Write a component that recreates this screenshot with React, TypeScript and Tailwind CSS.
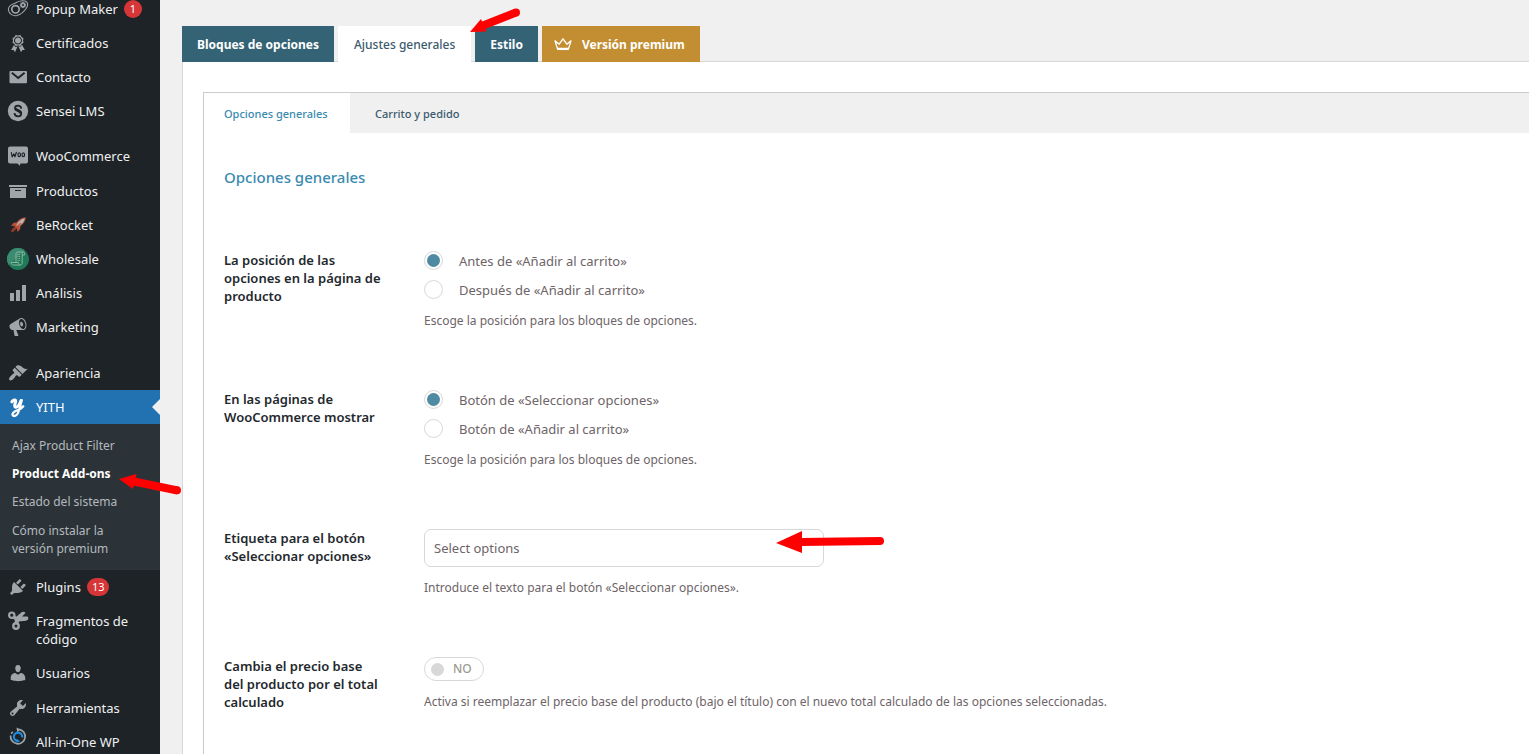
import type { ReactNode } from "react";

const GREY = "#a0a5aa";

const PATHS = {
  awards:
    "M4.46 5.16L5 7.46l-.54 2.29 2.01 1.24L7.7 13l2.3-.54 2.3.54 1.23-2.01 2.01-1.24L15 7.46l.54-2.3-2-1.24-1.24-2.01-2.3.55-2.29-.54-1.25 2zm5.55 6.34c-2.21 0-4-1.79-4-4 0-2.22 1.79-4 4-4 2.22 0 4 1.78 4 4 0 2.21-1.78 4-4 4zm-.02-1C8.33 10.5 7 9.16 7 7.5c0-1.65 1.33-3 2.99-3S13 5.85 13 7.5c0 1.66-1.35 3-3.01 3zm3.84 1.1l-1.28 2.24-2.08-.47L13 19.2l1.4-2.2h2.5zm-7.7.07l1.25 2.25 2.13-.51L7 19.2 5.6 17H3.1z",
  archive: "M19 4v2H1V4h18zM2 7h16v10H2V7zm11 3V9H7v1h6z",
  chart: "M18 18V2h-4v16h4zm-6 0V7H8v11h4zm-6 0v-8H2v8h4z",
  megaphone:
    "M18.15 5.94c.46 1.62.38 3.22-.02 4.48-.42 1.28-1.26 2.18-2.3 2.48-.16.06-.26.06-.4.06-.06.02-.12.02-.18.02-.06.02-.14.02-.22.02h-6.8l2.22 5.5c.02.14-.06.26-.14.34-.08.1-.24.16-.34.16H6.95c-.1 0-.26-.06-.34-.16-.08-.08-.16-.2-.14-.34l-1-5.5H4.25l-.02-.02c-.5.06-1.08-.18-1.54-.62s-.88-1.08-1.06-1.88c-.24-.8-.2-1.56-.02-2.2.18-.62.58-1.08 1.06-1.3l.02-.02 9-5.4c.1-.06.18-.1.24-.16.06-.04.14-.08.24-.12.16-.08.28-.12.5-.18 1.04-.3 2.24.1 3.22.98s1.84 2.24 2.26 3.86zm-2.58 5.98h-.02c.4-.1.74-.34 1.04-.7.58-.7.86-1.76.86-3.04 0-.64-.1-1.3-.28-1.98-.34-1.36-1.02-2.5-1.78-3.24s-1.68-1.1-2.46-.88c-.82.22-1.4.96-1.7 2-.32 1.04-.28 2.36.06 3.72.38 1.36 1 2.5 1.8 3.24.78.74 1.62 1.1 2.48.88zm-2.54-7.08c.22-.04.42-.02.62.04.38.16.76.48 1.02 1s.42 1.2.42 1.78c0 .3-.04.56-.12.8-.18.48-.44.84-.86.94-.34.1-.8-.06-1.14-.4s-.64-.86-.78-1.5c-.18-.62-.12-1.24.02-1.72s.48-.84.82-.94z",
  brush:
    "M14.48 11.06L7.41 3.99l1.5-1.5c.5-.56 2.3-.47 3.51.32 1.21.8 1.43 1.28 2.91 2.1 1.18.64 2.45 1.26 4.45.85zm-.71.71L6.7 4.7 4.93 6.47c-.39.39-.39 1.02 0 1.41l1.06 1.06c.39.39.39 1.03 0 1.42-.6.6-1.43 1.11-2.21 1.69-.35.26-.7.53-1.01.84C1.43 14.23.4 16.08 1.4 17.07c.99 1 2.84-.03 4.18-1.36.31-.31.58-.66.85-1.02.57-.78 1.08-1.61 1.69-2.21.39-.39 1.02-.39 1.41 0l1.06 1.06c.39.39 1.02.39 1.41 0z",
  plug: "M13.11 4.36L9.87 7.6 8 5.73l3.24-3.24c.35-.34 1.05-.2 1.56.32.52.51.66 1.21.31 1.55zm-8 1.77l.91-1.12 9.01 9.01-1.19.84c-.71.71-2.63 1.16-3.82 1.16H6.14L4.9 17.26c-.59.59-1.54.59-2.12 0-.59-.58-.59-1.53 0-2.12l1.24-1.24v-3.88c0-1.13.4-3.19 1.09-3.89zm7.26 3.97l3.24-3.24c.34-.35 1.04-.21 1.55.31.52.51.66 1.21.31 1.55l-3.24 3.25z",
  user: "M10 9.25c-2.27 0-2.73-3.44-2.73-3.44C7 4.02 7.82 2 9.97 2c2.16 0 2.98 2.02 2.71 3.81 0 0-.41 3.44-2.68 3.44zm0 2.57L12.72 10c2.39 0 4.52 2.33 4.52 4.53v2.49s-3.65 1.13-7.24 1.13c-3.65 0-7.24-1.13-7.24-1.13v-2.49c0-2.25 1.94-4.48 4.47-4.48z",
  wrench:
    "M16.68 9.77c-1.34 1.34-3.3 1.67-4.95.99l-5.41 6.52c-.99.99-2.59.99-3.58 0s-.99-2.59 0-3.57l6.52-5.42c-.68-1.65-.35-3.61.99-4.95 1.28-1.28 3.12-1.62 4.72-1.06l-2.89 2.89 2.82 2.82 2.86-2.87c.53 1.58.18 3.39-1.08 4.65zM3.81 16.21c.4.39 1.04.39 1.43 0 .4-.4.4-1.04 0-1.43-.39-.4-1.03-.4-1.43 0-.39.39-.39 1.03 0 1.43z",
};

function Svg({ children }: { children: ReactNode }) {
  return (
    <svg viewBox="0 0 20 20" className="size-5 shrink-0 overflow-visible" aria-hidden="true">
      {children}
    </svg>
  );
}

function Glyph({ d }: { d: string }) {
  return (
    <Svg>
      <path d={d} fill={GREY} />
    </Svg>
  );
}

const popupIcon = (
  <Svg>
    <g fill="none" stroke={GREY} strokeWidth="1.1">
      <path d="M7 4.2C10 2.2 14 1.4 17 2c3 .7 3.300 4.200 1.500 7-2 3-5.500 6.500-9.500 7.500-4 .9-8-1.500-8.500-5.200C0 8.500 2.500 5.500 7 4.200z" />
      <circle cx="7.500" cy="10.300" r="3.700" strokeWidth="1.700" />
    </g>
    <circle cx="15" cy="6" r="1.900" fill="none" stroke={GREY} strokeWidth="1.600" />
    <path d="M15 2.800v6.400M11.800 6h6.400M12.700 3.700l4.600 4.600M17.300 3.700l-4.600 4.600" stroke={GREY} strokeWidth=".9" />
    <circle cx="15" cy="6" r="1" fill="#1d2327" />
  </Svg>
);

const mailIcon = (
  <Svg>
    <rect x="1.500" y="4" width="17.500" height="12.200" rx="1" fill={GREY} />
    <path d="M3.800 5.800l6.400 5.300 6.400-5.300" fill="none" stroke="#1d2327" strokeWidth="1.900" />
  </Svg>
);

const senseiIcon = (
  <Svg>
    <circle cx="10" cy="10" r="10.200" fill={GREY} />
    <path
      d="M13.300 7.600c-.3-1.900-1.500-2.900-3.300-2.900-1.900 0-3 1-3 2.500 0 3.200 6.200 2.300 6.200 5.500 0 1.600-1.300 2.600-3.200 2.600-1.900 0-3.300-1.100-3.600-3.100"
      fill="none"
      stroke="#1d2327"
      strokeWidth="1.800"
    />
    <path d="M7.500 7.900c1.500 1.900 5.400 1.700 5.400 4.600" fill="none" stroke="#1d2327" strokeWidth="2.600" />
  </Svg>
);

const wooIcon = (
  <Svg>
    <path d="M2 .5h16a2 2 0 0 1 2 2V15.500a2 2 0 0 1-2 2h-5.500l-.8 2.200-2.200-2.200H2a2 2 0 0 1-2-2V2.500a2 2 0 0 1 2-2z" fill={GREY} />
    <g fill="none" stroke="#1d2327" strokeWidth="1.200" strokeLinecap="round" strokeLinejoin="round">
      <path d="M3.300 6.500l.9 4.300 1.700-2.900 1 2.900L8.400 6.300" />
      <ellipse cx="11.200" cy="8.700" rx="1.300" ry="1.900" />
      <ellipse cx="15.300" cy="8.700" rx="1.300" ry="1.900" />
    </g>
  </Svg>
);

const rocketIcon = (
  <Svg>
    <path d="M17.800 2.200c-4 .2-7 2-9 5L5.300 8 3 10.800l3 .2 3 3 .4 3 2.600-2.600.6-3.400c3-2 5-5 5.200-8.800z" fill="#b5523a" />
    <path d="M16.800 3.200c-3.500.5-6.200 3-8.600 7l1.600 1.600c3.700-2 6.500-5 7-8.600z" fill="#b9b4b2" />
    <path d="M12.800 8.300L6.500 14" stroke="#c4482d" strokeWidth="1.200" />
    <path d="M6 12l2 2-2 2.500-3.200 1 .9-3z" fill="#8d3a2b" />
  </Svg>
);

const wholesaleIcon = (
  <Svg>
    <circle cx="10" cy="10" r="11" fill="#1f7a58" />
    <path d="M10-1a11 11 0 0 0-9 17.300L16.500 1.100A11 11 0 0 0 10-1z" fill="#3a8b70" />
    <g fill="none" stroke="#8fb5a5" strokeWidth="1">
      <path d="M8 13V4.500c0-1 .6-1.500 1.600-1.500h6c-1 0-1.400.7-1.400 1.600V14c0 1.300-.7 2-1.900 2H5.200c-1.200 0-1.900-.8-1.900-2.500h7.200c0 1.700.6 2.500 1.800 2.500M14.200 6h2.300V4.300c0-.8-.3-1.300-.9-1.300" />
      <path d="M9.500 5.500h3M9.500 7.500h3M9.500 9.500h3M9.500 11.500h3" strokeDasharray="1 .6" />
    </g>
  </Svg>
);

const yithIcon = (
  <Svg>
    <g fill="none" stroke="#fff" strokeLinecap="round" strokeLinejoin="round">
      <path d="M3.800 4.800C5 3 7.500 2 7.700 4c.1 2-2.200 5-.4 6 2.500 1 4.500-3 5.700-6.500" strokeWidth="3" />
      <path d="M13.700 3.200c-.8 3.500-2 8-3.200 11.500-.8 2.800-3.200 5-5.200 4-2-1.200 0-4 3.500-5.200 2.800-1 5-2.200 6.500-4.200" strokeWidth="2.300" />
    </g>
  </Svg>
);

const scissorsIcon = (
  <Svg>
    <g fill="none" stroke={GREY}>
      <circle cx="3.800" cy="4.200" r="2.700" strokeWidth="2.200" />
      <circle cx="8" cy="15" r="2.700" strokeWidth="2.400" />
      <path d="M5.500 6l5 3M8.200 13l1.300-4" strokeWidth="3.600" />
    </g>
    <path d="M6.800 7L13.600 1.200c1.300-1 3.200-.6 3.900.8L14 5.400h5c1.500 0 1.900 2.500.5 3.500-1.100.8-2.400 1.100-4.200 1.200l-4.600.5-1.700 1.600-2.300-1z" fill={GREY} />
  </Svg>
);

const migrationIcon = (
  <Svg>
    <path d="M11.200 2.300a7.300 7.300 0 1 1-8.600 6.200" fill="none" stroke={GREY} strokeWidth="1.700" />
    <path d="M8.500.5l4 1.900-3.300 2.900z" fill={GREY} />
    <path d="M3.200 6.800l1.500-2" stroke={GREY} strokeWidth="1.500" />
    <path d="M14.200 10.500a4.200 4.200 0 1 0-4.500 3.500" fill="none" stroke="#1e8cde" strokeWidth="2.200" />
    <path d="M8.800 11.800l3.300 2.400-3.600 1.600z" fill="#1e8cde" />
  </Svg>
);

type ItemProps = { icon: ReactNode; label: string; count?: number; current?: boolean; raised?: boolean };

function MenuItem({ icon, label, count, current, raised }: ItemProps) {
  return (
    <li className={current ? "relative bg-[#2271b1]" : ""}>
      <a href="#" className="flex min-h-[34px] gap-2 py-2 pl-2 pr-3 text-[13px] leading-[18px] text-[#f0f0f1]">
        <span className={raised ? "flex h-2 items-center" : "flex h-[18px] items-center"}>{icon}</span>
        <span className={current ? "text-white" : ""}>{label}</span>
        {count !== undefined && (
          <span className="-ml-0.5 flex h-[18px] min-w-[18px] items-center justify-center rounded-full bg-[#d63638] px-[5px] text-[11px] text-white">
            {count}
          </span>
        )}
      </a>
      {current && (
        <svg viewBox="0 0 8 16" className="absolute right-0 top-[9px] h-4 w-2" aria-hidden="true">
          <path d="M8 0v16L0 8z" fill="#f0f0f1" />
        </svg>
      )}
    </li>
  );
}

function Sidebar() {
  const sub = "block px-3 py-[5px]";
  return (
    <nav aria-label="Menú principal" className="relative z-10 w-40 shrink-0 bg-[#1d2327]">
      <ul className="-mt-2">
        <MenuItem icon={popupIcon} label="Popup Maker" count={1} />
        <MenuItem icon={<Glyph d={PATHS.awards} />} label="Certificados" />
        <MenuItem icon={mailIcon} label="Contacto" />
        <MenuItem icon={senseiIcon} label="Sensei LMS" />
      </ul>
      <ul className="mt-[11px]">
        <MenuItem icon={wooIcon} label="WooCommerce" />
      </ul>
      <ul className="mt-px">
        <MenuItem icon={<Glyph d={PATHS.archive} />} label="Productos" />
        <MenuItem icon={rocketIcon} label="BeRocket" />
        <MenuItem icon={wholesaleIcon} label="Wholesale" />
        <MenuItem icon={<Glyph d={PATHS.chart} />} label="Análisis" />
        <MenuItem icon={<Glyph d={PATHS.megaphone} />} label="Marketing" />
      </ul>
      <ul className="mt-3">
        <MenuItem icon={<Glyph d={PATHS.brush} />} label="Apariencia" />
        <MenuItem icon={yithIcon} label="YITH" current />
        <li>
          <ul className="bg-[#2c3338] py-2 text-[12px] leading-[18px] text-[#b4b9be]">
            <li><a href="#" className={sub}>Ajax Product Filter</a></li>
            <li className="relative">
              <a href="#" aria-current="page" className="block px-3 py-[5px] font-bold text-white">Product Add-ons</a>
              <svg viewBox="0 0 64 24" className="pointer-events-none absolute left-[119px] top-[15px] h-6 w-16 overflow-visible" aria-hidden="true">
                <path d="M15 6.500L58.500 15.500" stroke="#f00" strokeWidth="8" />
                <circle cx="58" cy="15.300" r="4" fill="#f00" />
                <path d="M0 4L17.500-1l-3.500 15z" fill="#f00" />
              </svg>
            </li>
            <li><a href="#" className={sub}>Estado del sistema</a></li>
            <li><a href="#" className="block pb-1 pl-3 pr-8 pt-1.5">Cómo instalar la versión premium</a></li>
          </ul>
        </li>
        <MenuItem icon={<Glyph d={PATHS.plug} />} label="Plugins" count={13} />
        <MenuItem icon={scissorsIcon} label="Fragmentos de código" />
        <MenuItem icon={<Glyph d={PATHS.user} />} label="Usuarios" />
      </ul>
      <ul className="mt-px">
        <MenuItem icon={<Glyph d={PATHS.wrench} />} label="Herramientas" />
        <MenuItem icon={migrationIcon} label="All-in-One WP" raised />
      </ul>
    </nav>
  );
}

function Tabs() {
  return (
    <nav aria-label="Secciones" className="relative flex h-9 gap-1 text-[12px] font-bold leading-[38px] text-white">
      <a href="#" className="bg-[#346375] px-[15px]">Bloques de opciones</a>
      <div className="relative bg-white">
        <a href="#" aria-current="page" className="block px-4 font-medium text-[#3b5a6d]">Ajustes generales</a>
        <svg viewBox="0 0 52 26" className="pointer-events-none absolute -top-[18px] left-full z-10 h-[26px] w-[52px] overflow-visible" aria-hidden="true">
          <path d="M12 17.500L45 4.500" stroke="#f00" strokeWidth="8" />
          <circle cx="45" cy="4.500" r="4" fill="#f00" />
          <path d="M-1 24L10 11l5.500 12.500z" fill="#f00" />
        </svg>
      </div>
      <a href="#" className="bg-[#346375] px-[15px]">Estilo</a>
      <a href="#" className="flex gap-2.5 bg-[#c28e31] pl-3 pr-[15px]">
        <svg viewBox="0 0 18 14" className="h-3.5 w-[18px] self-center" fill="none" stroke="#fff" strokeWidth="1.300" strokeLinejoin="round" aria-hidden="true">
          <path d="M1 3.800l2.400 7.700h11.200L17 3.800l-4.200 3.400L9 1.800 5.200 7.200z" />
          <path d="M3.200 12.400h11.600" />
        </svg>
        Versión premium
      </a>
    </nav>
  );
}

function Row({ label, htmlFor, children, hint }: { label: string; htmlFor?: string; children: ReactNode; hint: string }) {
  const cls = "w-40 shrink-0 text-[13px] font-semibold leading-[18px] text-[#23282d]";
  return (
    <div className="flex gap-10">
      {htmlFor ? <label htmlFor={htmlFor} className={cls}>{label}</label> : <div id={label} className={cls}>{label}</div>}
      <div className="flex min-w-0 flex-1 flex-col gap-[11px]">
        {children}
        <p className="text-[12px] leading-[19px] text-[#6d6468]">{hint}</p>
      </div>
    </div>
  );
}

function Radios({ name, title, options }: { name: string; title: string; options: string[] }) {
  return (
    <div role="radiogroup" aria-labelledby={title} className="flex flex-col gap-[9px]">
      {options.map((option, i) => (
        <label key={option} className="flex h-5 items-start gap-4 text-[13px] leading-5 text-[#6d6468]">
          <input
            type="radio"
            name={name}
            defaultChecked={i === 0}
            className="grid size-[19px] shrink-0 appearance-none place-content-center rounded-full border border-[#d8d8d8] bg-white before:size-[13px] before:rounded-full checked:before:bg-[#4e8ba2]"
          />
          {option}
        </label>
      ))}
    </div>
  );
}

export default function App() {
  const pos = "La posición de las opciones en la página de producto";
  const shop = "En las páginas de WooCommerce mostrar";
  return (
    <div className="flex h-screen overflow-hidden bg-[#f0f0f1] font-['Noto_Sans','Open_Sans',sans-serif]">
      <Sidebar />
      <main className="min-w-0 flex-1 pl-[22px] pt-[26px]">
        <Tabs />
        <section className="-mt-px min-h-full border-l border-t border-[#d8d8d8] bg-white pl-5 pt-[30px]">
          <div className="min-h-screen border-l border-t border-[#ccc]">
            <nav aria-label="Opciones" className="flex h-10 gap-[5px] bg-[#f0f0f1] text-[11px] font-medium leading-[42px]">
              <a href="#" aria-current="page" className="min-w-[146px] bg-white px-5 text-[#3a8ab0]">Opciones generales</a>
              <a href="#" className="px-5 text-[#3b5a6d]">Carrito y pedido</a>
            </nav>
            <div className="px-5 pt-8">
              <h2 className="text-[15px] font-medium leading-6 text-[#3a8ab0]">Opciones generales</h2>
              <form className="mt-[62px] flex flex-col gap-[60px]">
                <Row label={pos} hint="Escoge la posición para los bloques de opciones.">
                  <Radios name="position" title={pos} options={["Antes de «Añadir al carrito»", "Después de «Añadir al carrito»"]} />
                </Row>
                <Row label={shop} hint="Escoge la posición para los bloques de opciones.">
                  <Radios name="shop" title={shop} options={["Botón de «Seleccionar opciones»", "Botón de «Añadir al carrito»"]} />
                </Row>
                <Row
                  label="Etiqueta para el botón «Seleccionar opciones»"
                  htmlFor="button-label"
                  hint="Introduce el texto para el botón «Seleccionar opciones»."
                >
                  <div className="relative w-full max-w-[400px]">
                    <input
                      id="button-label"
                      type="text"
                      defaultValue="Select options"
                      className="block h-[38px] w-full rounded-[7px] border border-[#d8d8d8] bg-white px-[9px] text-[13px] text-[#6d6468]"
                    />
                    <svg viewBox="0 0 108 22" className="pointer-events-none absolute -right-[60px] top-[2px] h-[22px] w-[108px] overflow-visible" aria-hidden="true">
                      <path d="M25 11L104 10" stroke="#f00" strokeWidth="8" />
                      <circle cx="104" cy="10" r="4" fill="#f00" />
                      <path d="M0 12L26 0v22z" fill="#f00" />
                    </svg>
                  </div>
                </Row>
                <Row
                  label="Cambia el precio base del producto por el total calculado"
                  htmlFor="replace-price"
                  hint="Activa si reemplazar el precio base del producto (bajo el título) con el nuevo total calculado de las opciones seleccionadas."
                >
                  <label className="flex h-6 w-[60px] items-center gap-[9px] rounded-full border border-[#d8d8d8] bg-white pl-1.5 text-[12px] font-medium text-[#9b9b93]">
                    <input id="replace-price" type="checkbox" role="switch" className="size-[13px] appearance-none rounded-full bg-[#d8d8d8]" />
                    NO
                  </label>
                </Row>
              </form>
            </div>
          </div>
        </section>
      </main>
    </div>
  );
}
